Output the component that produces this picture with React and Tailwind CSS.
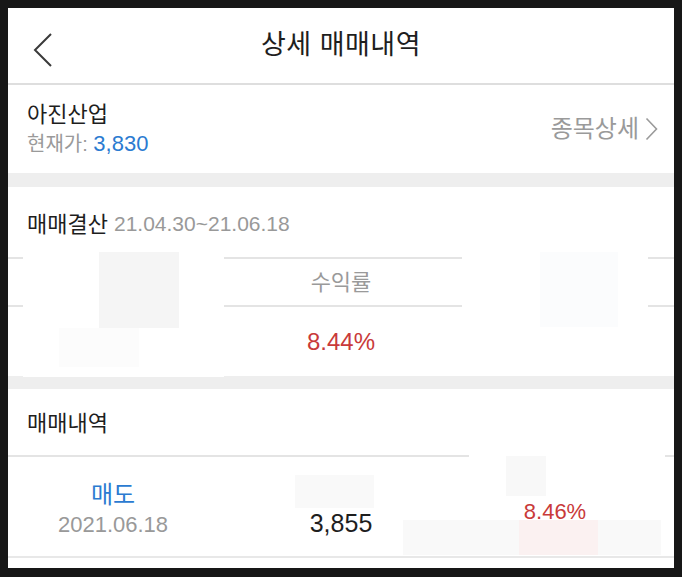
const FONT = { fontFamily: '"Liberation Sans", "Noto Sans CJK KR", sans-serif' };

// faint leftover blocks sitting over the table (page coords)
const PATCHES = [
  { c: 'bg-white left-[23px] top-[252px] w-[201px] h-[125px]' },
  { c: 'bg-[#f5f5f5] left-[99px] top-[252px] w-[80px] h-[76px]' },
  { c: 'bg-[#fcfcfc] left-[59px] top-[328px] w-[80px] h-[39px]' },
  { c: 'bg-white left-[462px] top-[252px] w-[186px] h-[120px]' },
  { c: 'bg-[#fbfcfd] left-[540px] top-[252px] w-[78px] h-[75px]' },
  { c: 'bg-white left-[469px] top-[454px] w-[196px] h-[44px]' },
  { c: 'bg-[#f8f8f8] left-[506px] top-[456px] w-[40px] h-[40px]' },
  { c: 'bg-[#f9f9f9] left-[295px] top-[475px] w-[79px] h-[33px]' },
  { c: 'bg-[#f9f9f9] left-[403px] top-[520px] w-[258px] h-[35px]' },
  { c: 'bg-[#fbf1f1] left-[519px] top-[520px] w-[79px] h-[35px]' },
];

function Header() {
  return (
    <div className="relative h-[77px] flex items-center justify-center border-b-2 border-[#dedede]">
      <svg className="absolute left-[24px] top-[24px]" width="22" height="36" viewBox="0 0 22 36" fill="none">
        <path d="M19 2 L3 18 L19 34" stroke="#3a3a3a" strokeWidth="2" />
      </svg>
      <h1 className="text-[27px] text-[#1e1e1e] tracking-[0.5px]">상세 매매내역</h1>
    </div>
  );
}

function StockInfo() {
  return (
    <div className="h-[88px] flex items-center justify-between pl-[19px] pr-[16px]">
      <div className="flex flex-col gap-[1px]">
        <div className="text-[22px] leading-[29px] text-[#1e1e1e]">아진산업</div>
        <div className="text-[20px] leading-[28px] text-[#9a9a9a]">
          현재가: <span className="text-[#2b7bd1] text-[22px]">3,830</span>
        </div>
      </div>
      <div className="flex items-center gap-[6px] text-[24px] text-[#9a9a9a]">
        <span>종목상세</span>
        <svg width="13" height="24" viewBox="0 0 13 24" fill="none">
          <path d="M1.5 1.5 L11.5 12 L1.5 22.5" stroke="#9a9a9a" strokeWidth="1.6" />
        </svg>
      </div>
    </div>
  );
}

function Settlement() {
  return (
    <div className="h-[189px] flex flex-col">
      <div className="h-[70px] flex items-center pl-[19px] pt-[4px] gap-[6px]">
        <span className="text-[22px] text-[#1e1e1e]">매매결산</span>
        <span className="text-[21px] text-[#999999]">21.04.30~21.06.18</span>
      </div>
      <div className="grid grid-cols-3 h-[50px] border-y-2 border-[#e4e4e4]">
        <div />
        <div className="flex items-center justify-center text-[22px] text-[#9a9a9a]">수익률</div>
        <div />
      </div>
      <div className="grid grid-cols-3 flex-1">
        <div />
        <div className="flex items-center justify-center text-[24px] text-[#c93a3a]">8.44%</div>
        <div />
      </div>
    </div>
  );
}

function Trades() {
  return (
    <div className="flex flex-col">
      <div className="h-[68px] flex items-center pl-[19px] pt-[2px] text-[22px] text-[#1e1e1e] border-b-2 border-[#e4e4e4]">
        매매내역
      </div>
      <div className="grid grid-cols-3 h-[101px] border-b-2 border-[#e8e8e8]">
        <div className="flex flex-col items-center pt-[22px] pr-[12px]">
          <span className="text-[24px] leading-[31px] text-[#2b7bd1]">매도</span>
          <span className="text-[22px] leading-[29px] text-[#999999]">2021.06.18</span>
        </div>
        <div className="flex justify-center pt-[51px]">
          <span className="text-[25px] leading-[30px] text-[#1e1e1e]">3,855</span>
        </div>
        <div className="flex justify-center pt-[41px] pr-[16px]">
          <span className="text-[22px] leading-[27px] text-[#c93a3a]">8.46%</span>
        </div>
      </div>
      <div className="h-[8px]" />
    </div>
  );
}

export default function App() {
  return (
    <div className="relative w-[682px] h-[577px] bg-[#171717] pt-[8px] pl-[8px] overflow-hidden" style={FONT}>
      <div className="w-[666px] h-[560px] bg-white flex flex-col overflow-hidden">
        <Header />
        <StockInfo />
        <div className="h-[14px] bg-[#eeeeee]" />
        <Settlement />
        <div className="h-[13px] bg-[#eeeeee]" />
        <Trades />
      </div>
      {PATCHES.map((p, i) => (
        <div key={i} className={`absolute ${p.c}`} />
      ))}
    </div>
  );
}
